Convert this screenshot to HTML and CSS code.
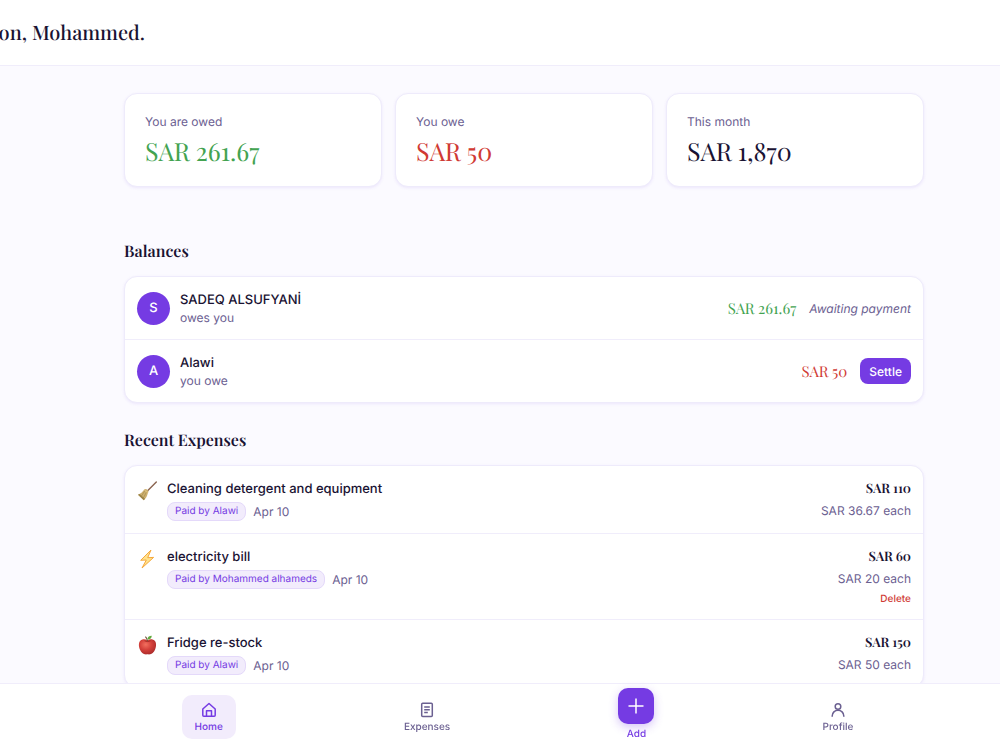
FILE: index.html
```html
<!DOCTYPE html>
<html lang="en">
<head>
  <meta charset="UTF-8">
  <meta name="viewport" content="width=device-width, initial-scale=1.0">
  <title>Home</title>
  <link rel="stylesheet" href="styles.css">
</head>
<body>

  <header class="topbar">
    <h1 class="greeting">Good afternoon, Mohammed.</h1>
  </header>

  <main class="page">
    <section class="stats">
      <div class="card stat">
        <div class="stat-label">You are owed</div>
        <div class="stat-value positive">SAR 261.67</div>
      </div>
      <div class="card stat">
        <div class="stat-label">You owe</div>
        <div class="stat-value negative">SAR 50</div>
      </div>
      <div class="card stat">
        <div class="stat-label">This month</div>
        <div class="stat-value">SAR 1,870</div>
      </div>
    </section>

    <section class="section">
      <h2 class="section-title">Balances</h2>
      <div class="card">
        <div class="balance">
          <div class="avatar">S</div>
          <div class="balance-info">
            <div class="name">SADEQ ALSUFYANİ</div>
            <div class="balance-note">owes you</div>
          </div>
          <div class="balance-amount positive">SAR 261.67</div>
          <div class="waiting">Awaiting payment</div>
        </div>
        <div class="balance">
          <div class="avatar">A</div>
          <div class="balance-info">
            <div class="name">Alawi</div>
            <div class="balance-note">you owe</div>
          </div>
          <div class="balance-amount negative">SAR 50</div>
          <button class="settle" type="button">Settle</button>
        </div>
      </div>
    </section>

    <section class="section">
      <h2 class="section-title">Recent Expenses</h2>
      <div class="card">
        <div class="expense">
          <svg class="expense-icon" viewBox="0 0 20 20" aria-hidden="true">
            <path d="M19.3 1 10.6 9.8" stroke="#8a6450" stroke-width="1.4" stroke-linecap="round"/>
            <path d="M7.2 8.6c1.2-1 2.3-.6 3.3.4s1.4 2 .3 3.2c-.5 2.9-2 5.2-4 7L1 13.8c2.6-1 4.5-2.7 6.2-5.2z" fill="#cdb070"/>
            <path d="M1 13.8 6.8 19.2 8 17.8 2.6 12.9z" fill="#9c8448"/>
            <path d="M8 9.5 4 15.8M9.5 11 6 17.5" stroke="#a08648" stroke-width=".6"/>
            <path d="m7.6 8.9 2.9 3" stroke="#e8cf86" stroke-width=".8"/>
          </svg>
          <div class="expense-info">
            <div class="name">Cleaning detergent and equipment</div>
            <div class="expense-meta"><span class="badge">Paid by Alawi</span><span class="date">Apr 10</span></div>
          </div>
          <div class="expense-side">
            <div class="expense-amount">SAR 110</div>
            <div class="each">SAR 36.67 each</div>
          </div>
        </div>
        <div class="expense">
          <svg class="expense-icon" viewBox="0 0 20 20" aria-hidden="true">
            <path d="M14 1 3.7 11.3l5.6-.3L5 19 16.6 8.4l-5.9.3z" fill="#ffe28c" stroke="#f5a83c" stroke-width="1" stroke-linejoin="round"/>
          </svg>
          <div class="expense-info">
            <div class="name">electricity bill</div>
            <div class="expense-meta"><span class="badge">Paid by Mohammed alhameds</span><span class="date">Apr 10</span></div>
          </div>
          <div class="expense-side">
            <div class="expense-amount">SAR 60</div>
            <div class="each">SAR 20 each</div>
            <button class="delete" type="button">Delete</button>
          </div>
        </div>
        <div class="expense">
          <svg class="expense-icon" viewBox="0 0 20 20" aria-hidden="true">
            <defs>
              <radialGradient id="apple" cx=".4" cy=".35" r=".7">
                <stop offset="0" stop-color="#f2705f"/>
                <stop offset=".5" stop-color="#d4403a"/>
                <stop offset="1" stop-color="#a82a2a"/>
              </radialGradient>
            </defs>
            <path d="M10.5 5.2c2.5-1.4 5.4-1.3 7.2.6 1.9 2 1.7 6 .3 9-1.3 2.9-3.4 5.2-7.5 4.5-4.1.7-6.2-1.6-7.5-4.5-1.4-3-1.6-7 .3-9 1.8-1.9 4.7-2 7.2-.6z" fill="url(#apple)"/>
            <path d="M7.5 5.8q3 1.5 6 0" stroke="#96231f" stroke-width=".8" fill="none"/>
            <path d="M10.5 6C10.4 4.3 9.7 2.9 8.4 1.6" stroke="#70513a" stroke-width="1.1" fill="none"/>
            <path d="M10.4 4.5c0-2.2 1.5-3.7 4.4-3.8-.1 2.5-1.7 4-4.4 3.8z" fill="#62aa3e"/>
          </svg>
          <div class="expense-info">
            <div class="name">Fridge re-stock</div>
            <div class="expense-meta"><span class="badge">Paid by Alawi</span><span class="date">Apr 10</span></div>
          </div>
          <div class="expense-side">
            <div class="expense-amount">SAR 150</div>
            <div class="each">SAR 50 each</div>
          </div>
        </div>
      </div>
    </section>
  </main>

  <nav class="bottom-nav">
    <div class="nav-items">
      <a class="nav-item active" href="#">
        <svg class="nav-icon" viewBox="0 0 16 16" aria-hidden="true">
          <path d="M1.8 7 8 1.5 14.2 7v6.2a1 1 0 0 1-1 1H2.8a1 1 0 0 1-1-1z"/>
          <path d="M5.5 14V8.800h5V14"/>
        </svg>
        Home
      </a>
      <a class="nav-item" href="#">
        <svg class="nav-icon" viewBox="0 0 16 16" aria-hidden="true">
          <rect x="2.7" y="1.2" width="10.6" height="13.4" rx="1"/>
          <path d="M5.2 5h5.6M5.2 7.8h5.6M5.2 10.6h3.6"/>
        </svg>
        Expenses
      </a>
      <a class="nav-item add" href="#">
        <span class="add-box">
          <svg class="add-icon" viewBox="0 0 18 18" aria-hidden="true">
            <path d="M9 1.5v15M1.5 9h15"/>
          </svg>
        </span>
        Add
      </a>
      <a class="nav-item" href="#">
        <svg class="nav-icon" viewBox="0 0 16 16" aria-hidden="true">
          <circle cx="8" cy="4.5" r="2.8"/>
          <path d="M2.2 14.8V14a5.8 5.8 0 0 1 11.6 0v.8"/>
        </svg>
        Profile
      </a>
    </div>
  </nav>

</body>
</html>
```
FILE: styles.css
```css
* {
  box-sizing: border-box;
}

body {
  margin: 0;
  background: #fbfaff;
  color: #1a1333;
  font-family: Inter, "Liberation Sans", sans-serif;
  font-size: 13px;
  text-rendering: geometricPrecision;
}

h1, h2 {
  margin: 0;
}

.greeting, .section-title, .stat-value, .balance-amount, .expense-amount {
  font-family: "Playfair Display", "Liberation Serif", serif;
}

/* Header */
.topbar {
  display: flex;
  height: 66px;
  background: #fff;
  border-bottom: 1px solid #f0edfb;
}

.greeting {
  display: flex;
  justify-content: flex-end;
  align-items: center;
  width: 145px;
  overflow: hidden;
  white-space: nowrap;
  font-size: 20px;
  font-weight: 500;
}

/* Content */
.page {
  max-width: 848px;
  margin: 0 auto;
  padding: 27px 0 100px 48px;
}

.card {
  background: #fff;
  border: 1px solid #eeebfb;
  border-radius: 13px;
  box-shadow: 0 1px 3px rgba(109, 60, 224, 0.1);
}

.stats {
  display: grid;
  grid-template-columns: repeat(3, 1fr);
  gap: 13px;
  margin-bottom: 55px;
}

.stat {
  padding: 20px 20px 18px;
}

.stat-label {
  color: #6b6091;
  font-size: 12px;
  line-height: 16px;
}

.stat-value {
  margin-top: 6px;
  font-size: 25px;
  line-height: 32px;
}

.positive {
  color: #43a351;
}

.negative {
  color: #d03a34;
}

.section {
  margin-bottom: 28px;
}

.section-title {
  margin-bottom: 14px;
  font-size: 16px;
  font-weight: 600;
  line-height: 20px;
}

.name {
  font-weight: 500;
  line-height: 20px;
}

/* Balances */
.balance {
  display: flex;
  align-items: center;
  padding: 13px 12px;
}

.balance + .balance, .expense + .expense {
  border-top: 1px solid #f0edfb;
}

.avatar {
  width: 33px;
  height: 33px;
  margin-right: 10px;
  border-radius: 50%;
  background: #753be3;
  color: #fff;
  font-weight: 500;
  line-height: 33px;
  text-align: center;
}

.balance-info, .expense-info {
  flex: 1;
}

.balance-note {
  color: #6b6091;
  font-size: 12px;
  line-height: 16px;
}

.balance-amount {
  margin-right: 13px;
  font-size: 15px;
}

.waiting {
  color: #6b6091;
  font-size: 12px;
  font-style: italic;
}

.settle {
  height: 26px;
  padding: 0 9px;
  border: 0;
  border-radius: 8px;
  background: #753be3;
  color: #fff;
  font: 500 12px Inter, "Liberation Sans", sans-serif;
  text-rendering: inherit;
  cursor: pointer;
}

/* Expenses */
.expense {
  display: flex;
  align-items: flex-start;
  padding: 13px 12px 12px;
}

.expense-icon {
  width: 20px;
  height: 20px;
  margin: 2px 10px 0 0;
  fill: none;
}

.expense-meta {
  display: flex;
  align-items: center;
  gap: 7px;
  margin-top: 3px;
}

.badge {
  padding: 0 7px;
  border: 1px solid #e4d9fa;
  border-radius: 8px;
  background: #f2ecfc;
  color: #753be3;
  font-size: 10px;
  line-height: 17px;
}

.date, .each {
  color: #6b6091;
  font-size: 12px;
  line-height: 18px;
}

.expense-side {
  display: flex;
  flex-direction: column;
  align-items: flex-end;
  gap: 3px;
}

.expense-amount {
  font-size: 13px;
  font-weight: 600;
  line-height: 20px;
}

.delete {
  padding: 0;
  border: 0;
  background: none;
  color: #d03a34;
  font: 500 10px/16px Inter, "Liberation Sans", sans-serif;
  text-rendering: inherit;
  cursor: pointer;
}

/* Bottom navigation */
.bottom-nav {
  position: fixed;
  left: 0;
  right: 0;
  bottom: 0;
  height: 67px;
  padding-left: 48px;
  background: #fff;
  border-top: 1px solid #f0edfb;
}

.nav-items {
  display: flex;
  justify-content: space-around;
  align-items: center;
  max-width: 840px;
  height: 100%;
  margin: 0 auto;
}

.nav-item {
  display: flex;
  flex-direction: column;
  align-items: center;
  gap: 2px;
  padding: 7px 13px 5px;
  border-radius: 10px;
  color: #6b6091;
  font-size: 10px;
  font-weight: 500;
  line-height: 14px;
  text-decoration: none;
}

.nav-item.active {
  background: #f2ecfc;
  color: #753be3;
}

.nav-icon {
  width: 16px;
  height: 16px;
}

.nav-icon, .add-icon {
  fill: none;
  stroke: currentColor;
  stroke-width: 1.5;
  stroke-linejoin: round;
}

.nav-item.add {
  gap: 3px;
  padding: 0 0 5px;
  color: #753be3;
}

.add-box {
  display: grid;
  place-items: center;
  width: 36px;
  height: 36px;
  border-radius: 10px;
  background: #753be3;
  box-shadow: 0 3px 10px rgba(117, 59, 227, 0.3);
  color: #fff;
}

.add-icon {
  width: 18px;
  height: 18px;
}
```
